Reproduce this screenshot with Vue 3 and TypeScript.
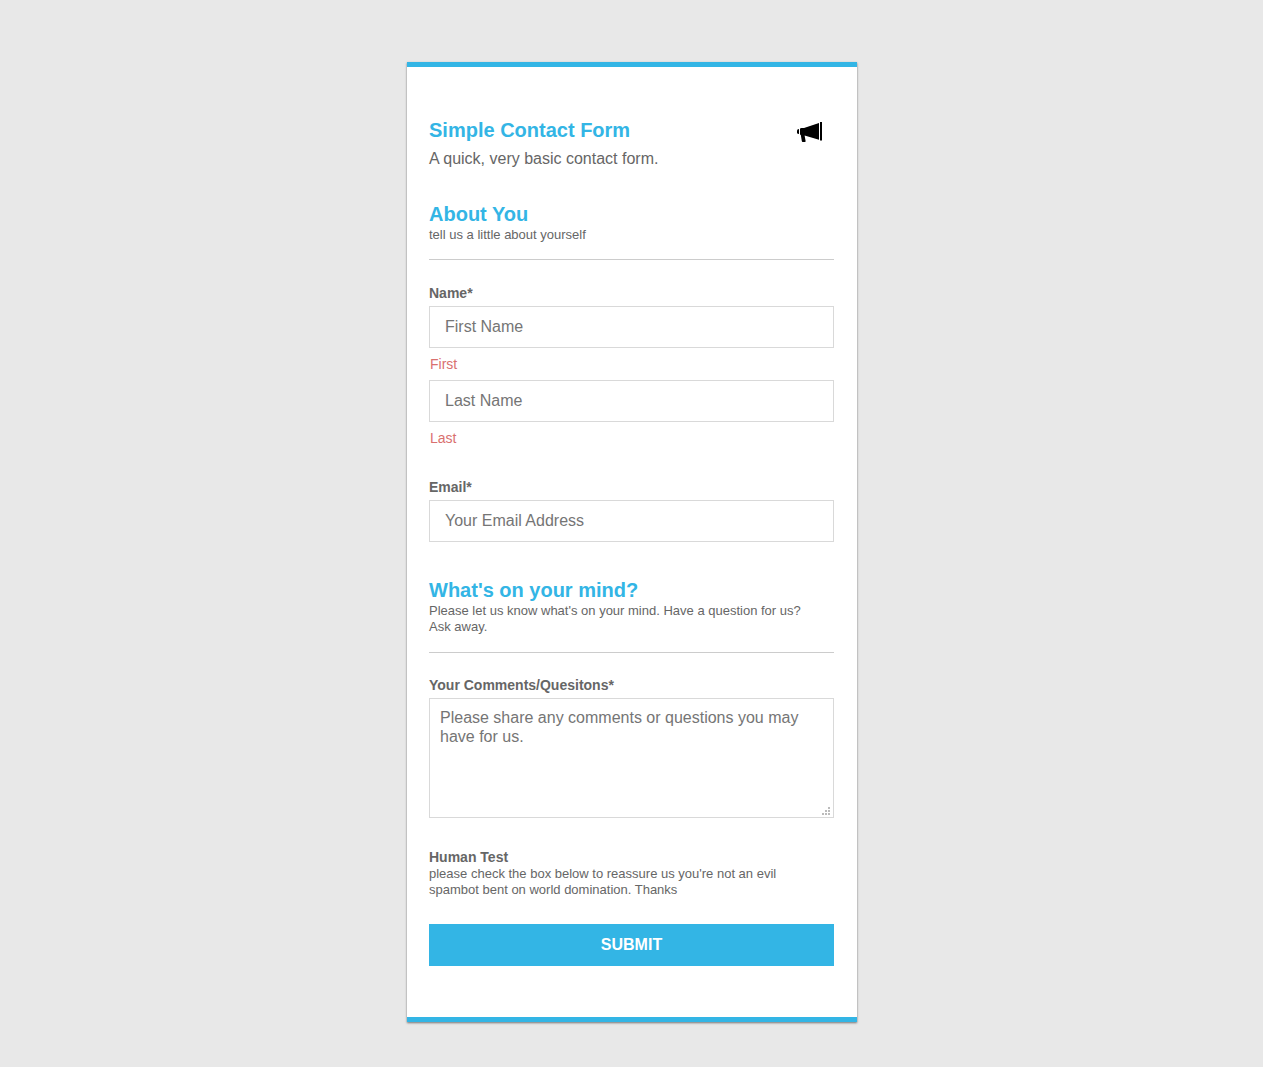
<script setup lang="ts">
import { reactive } from 'vue'

interface ContactForm {
  first: string
  last: string
  email: string
  comments: string
}

const form = reactive<ContactForm>({ first: '', last: '', email: '', comments: '' })
</script>

<template>
  <main class="page">
    <form class="card" @submit.prevent>
      <header class="intro">
        <div>
          <h1 class="title">Simple Contact Form</h1>
          <p class="lead">A quick, very basic contact form.</p>
        </div>
        <svg class="horn" viewBox="0 0 26 22" width="26" height="22" aria-hidden="true">
          <path d="M2 7V12Q0 12 0 10.5V8.5Q0 7 2 7Z" />
          <path d="M3 7Q3 6 4.5 6H7L22 .9V17.8L7.6 13.6L8.6 19Q8.7 20 8 20H5.6Q5 20 4.8 19L3.8 13Q3 13 3 12Z" />
          <rect x="23" y="0" width="2" height="18.500" />
        </svg>
      </header>

      <section class="section about">
        <h2 class="title">About You</h2>
        <p class="note">tell us a little about yourself</p>
      </section>

      <fieldset class="names">
        <legend class="label">Name*</legend>
        <input id="first" v-model="form.first" class="box" type="text" placeholder="First Name" />
        <label class="hint" for="first">First</label>
        <input id="last" v-model="form.last" class="box" type="text" placeholder="Last Name" />
        <label class="hint" for="last">Last</label>
      </fieldset>

      <div class="email">
        <label class="label" for="email">Email*</label>
        <input id="email" v-model="form.email" class="box" type="email" placeholder="Your Email Address" />
      </div>

      <section class="section mind">
        <h2 class="title">What's on your mind?</h2>
        <p class="note">Please let us know what's on your mind. Have a question for us? Ask away.</p>
      </section>

      <div class="comments">
        <label class="label" for="comments">Your Comments/Quesitons*</label>
        <textarea
          id="comments"
          v-model="form.comments"
          class="box area"
          placeholder="Please share any comments or questions you may have for us."
        ></textarea>
      </div>

      <section class="human">
        <h3 class="label">Human Test</h3>
        <p class="note">please check the box below to reassure us you're not an evil spambot bent on world domination. Thanks</p>
      </section>

      <button class="submit" type="submit">SUBMIT</button>
    </form>
  </main>
</template>

<style>
body {
  background: #e8e8e8;
}
</style>

<style scoped>
.page {
  display: flex;
  justify-content: center;
  padding: 62px 0 45px;
  font-family: "Liberation Sans", Arial, sans-serif;
  color: #666;
}
.card {
  box-sizing: border-box;
  width: 100%;
  max-width: 450px;
  margin-left: 1px;
  padding: 51px 23px 51px 22px;
  border-top: 5px solid #33b5e5;
  border-bottom: 5px solid #33b5e5;
  background: #fff;
  box-shadow: 0 1px 2px rgba(0, 0, 0, 0.5);
}
h1, h2, h3, p {
  margin: 0;
}
.intro {
  display: flex;
  justify-content: space-between;
}
.horn {
  flex: none;
  margin: 4px 11px 0 0;
}
.title {
  font-size: 20px;
  line-height: 24px;
  font-weight: 700;
  color: #33b5e5;
}
.lead {
  margin-top: 7px;
  font-size: 16px;
  line-height: 20px;
}
.section {
  padding-bottom: 17px;
  border-bottom: 1px solid #ccc;
}
.about {
  margin-top: 33px;
  padding-bottom: 16px;
}
.mind {
  margin-top: 36px;
}
.note {
  margin-top: 1px;
  padding-right: 20px;
  font-size: 13px;
  line-height: 16px;
}
.names {
  min-width: 0;
  margin: 25px 0 0;
  padding: 0;
  border: 0;
}
.label {
  display: block;
  padding: 0;
  font-size: 14px;
  line-height: 16px;
  font-weight: 700;
}
.box {
  box-sizing: border-box;
  display: block;
  width: 100%;
  height: 42px;
  margin: 5px 0 0;
  padding: 0 15px;
  border: 1px solid #d9d9d9;
  border-radius: 0;
  outline: 0;
  background: #fff;
  font: 16px/19px "Liberation Sans", Arial, sans-serif;
  color: #666;
}
.box::placeholder {
  color: #757575;
}
.hint {
  display: block;
  margin: 8px 0 8px 1px;
  font-size: 14px;
  line-height: 16px;
  color: #d9706f;
}
.hint + .box {
  margin-top: 8px;
}
.email {
  margin-top: 25px;
}
.comments {
  margin-top: 24px;
}
.area {
  height: 120px;
  padding: 9px 10px;
  resize: vertical;
}
/* six grip dots stepping up to the right */
.area::-webkit-resizer {
  background:
    linear-gradient(#bbb, #bbb) 10px 5px / 2px 2px no-repeat,
    linear-gradient(#bbb, #bbb) 7px 8px / 2px 2px no-repeat,
    linear-gradient(#bbb, #bbb) 10px 8px / 2px 2px no-repeat,
    linear-gradient(#bbb, #bbb) 4px 11px / 2px 2px no-repeat,
    linear-gradient(#bbb, #bbb) 7px 11px / 2px 2px no-repeat,
    linear-gradient(#bbb, #bbb) 10px 11px / 2px 2px no-repeat;
}
.human {
  margin-top: 31px;
}
.submit {
  display: block;
  width: 100%;
  height: 42px;
  margin-top: 26px;
  padding: 0;
  border: 0;
  background: #33b5e5;
  font: 700 16px/20px "Liberation Sans", Arial, sans-serif;
  color: #fff;
}
</style>
